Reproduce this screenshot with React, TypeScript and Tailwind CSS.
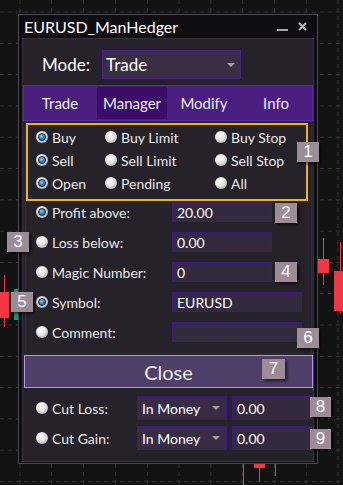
import React from "react";

const badgeSpots = [
  { n: "1", cls: "left-[297px] top-[142px] w-[22px]" },
  { n: "2", cls: "left-[275px] top-[203px] w-[22px]" },
  { n: "3", cls: "left-[7px] top-[232px] w-[22px]" },
  { n: "4", cls: "left-[275px] top-[262px] w-[22px]" },
  { n: "5", cls: "left-[11px] top-[292px] w-[22px]" },
  { n: "6", cls: "left-[297px] top-[328px] w-[22px]" },
  { n: "7", cls: "left-[262px] top-[359px] w-[23px]" },
  { n: "8", cls: "left-[310px] top-[397px] w-[21px]" },
  { n: "9", cls: "left-[310px] top-[429px] w-[21px]" },
];

const Radio: React.FC<{ on?: boolean }> = ({ on }) =>
  on ? (
    <span className="flex h-[12px] w-[12px] shrink-0 items-center justify-center rounded-full bg-[radial-gradient(circle_at_40%_35%,#ffffff,#c4c4c4_60%,#8a8a8a)]">
      <span className="h-[8px] w-[8px] rounded-full border border-[#14253a] bg-[radial-gradient(circle_at_40%_35%,#86cdf6,#2383c4_55%,#0b4877)]" />
    </span>
  ) : (
    <span className="h-[12px] w-[12px] shrink-0 rounded-full bg-[radial-gradient(circle_at_40%_35%,#ffffff,#e4e4e4_45%,#9a9a9a)]" />
  );

const Arrow = () => (
  <span className="h-0 w-0 border-x-[4px] border-t-[4px] border-x-transparent border-t-[#a3a3a3]" />
);

const Chart = () => {
  const xs = Array.from({ length: 11 }, (_, i) => 20 + i * 31.8);
  const ys = Array.from({ length: 16 }, (_, i) => 12 + i * 31.3);
  return (
    <svg className="absolute inset-0" width="343" height="485">
      {xs.map((x) => (
        <line key={"v" + x} x1={x} y1={0} x2={x} y2={485} stroke="#383838" strokeDasharray="4 4" />
      ))}
      {ys.map((y) => (
        <line key={"h" + y} x1={0} y1={y} x2={343} y2={y} stroke="#383838" strokeDasharray="4 4" />
      ))}
      <line x1={4.5} y1={275} x2={4.5} y2={327} stroke="#f23645" />
      <rect x={0} y={292} width={9} height={26} fill="#f23645" />
      <rect x={14} y={289} width={4} height={31} fill="#139a7e" />
      <line x1={323.5} y1={238} x2={323.5} y2={285} stroke="#f23645" />
      <rect x={318} y={259} width={11} height={14} fill="#f23645" />
      <line x1={340.5} y1={242} x2={340.5} y2={313} stroke="#f23645" />
      <rect x={334} y={271} width={10} height={40} fill="#f23645" />
      <line x1={243.5} y1={463} x2={243.5} y2={485} stroke="#f23645" />
      <line x1={259.5} y1={463} x2={259.5} y2={482} stroke="#f23645" />
      <rect x={254} y={463} width={11} height={5} fill="#f23645" />
      <line x1={270} y1={463.5} x2={281} y2={463.5} stroke="#139a7e" />
      <line x1={275.5} y1={463} x2={275.5} y2={476} stroke="#139a7e" />
    </svg>
  );
};

const orders: [string, boolean][] = [
  ["Buy", true], ["Buy Limit", false], ["Buy Stop", false],
  ["Sell", true], ["Sell Limit", false], ["Sell Stop", false],
  ["Open", true], ["Pending", false], ["All", false],
];

const filters = [
  { label: "Profit above:", value: "20.00", on: true, wide: false },
  { label: "Loss below:", value: "0.00", on: false, wide: false },
  { label: "Magic Number:", value: "0", on: false, wide: false },
  { label: "Symbol:", value: "EURUSD", on: true, wide: true },
  { label: "Comment:", value: "", on: false, wide: true },
];

export default function App() {
  return (
    <div className="relative h-[485px] w-[343px] overflow-hidden bg-[#131313] font-['Lato',sans-serif] text-[#e8e8e8]">
      <Chart />
      <div className="relative pl-[18px] pt-[14px]">
        <div className="flex h-[450px] w-[300px] flex-col border border-[#4a4852] bg-[#0e0d11] px-[3px] pb-[1px]">
          {/* title bar */}
          <div className="flex h-[23px] shrink-0 items-center justify-between pl-[2px] pr-[7px]">
            <span className="text-[16px] leading-none text-white">EURUSD_ManHedger</span>
            <div className="flex items-center gap-[10px]">
              <svg width="11" height="10" viewBox="0 0 11 10">
                <line x1="0" y1="8" x2="11" y2="8" stroke="#a9a9a9" strokeWidth="2" />
              </svg>
              <svg width="9" height="9" viewBox="0 0 9 9">
                <path d="M1 1L8 8M8 1L1 8" stroke="#b3b3b3" strokeWidth="2" />
              </svg>
            </div>
          </div>

          {/* body */}
          <div className="flex flex-1 flex-col border border-[#38343e] bg-[#262229]">
            <div className="mt-[11px] flex h-[29px] items-center pl-[19px]">
              <span className="w-[60px] text-[17px] text-white">Mode:</span>
              <div className="flex h-[29px] w-[139px] items-center justify-between border border-[#4b1e8e] bg-[#3a2e45] pl-[3px] pr-[5px]">
                <span className="text-[17px] text-white">Trade</span>
                <Arrow />
              </div>
            </div>

            <div className="mt-[6px] grid h-[36px] grid-cols-4 border border-[#5b2b9e] bg-[#4a1e7e] py-[1px] text-[15px] text-[#ececf2]">
              <div className="flex items-center justify-center">Trade</div>
              <div className="mx-[1px] flex items-center justify-center bg-[#3b0d69]">Manager</div>
              <div className="flex items-center justify-center">Modify</div>
              <div className="flex items-center justify-center">Info</div>
            </div>

            <div className="ml-[2px] w-[287px] border border-[#2f1d78] pb-[11px]">
              <div className="mt-[1px] grid h-[78px] w-[282px] grid-cols-[69px_110px_1fr] content-start gap-y-[1px] border-2 border-[#efb21a] pl-[8px] pt-[1px] text-[14px]">
                {orders.map(([t, on]) => (
                  <div key={t} className="flex h-[22px] items-center gap-[4px]">
                    <Radio on={on} />
                    <span>{t}</span>
                  </div>
                ))}
              </div>

              <div className="mt-[1px] flex flex-col gap-[10px] pl-[10px] text-[14px]">
                {filters.map((f) => (
                  <div key={f.label} className="flex h-[20px] items-center">
                    <Radio on={f.on} />
                    <span className="ml-[4px] w-[120px]">{f.label}</span>
                    <div
                      className={
                        "flex h-[20px] items-center border border-[#3b1a88] bg-[#342a40] pl-[4px] text-white " +
                        (f.wide ? "w-[130px]" : "w-[100px]")
                      }
                    >
                      {f.value}
                    </div>
                  </div>
                ))}
              </div>
            </div>

            <button className="ml-[1px] mt-[1px] flex h-[33px] w-[289px] items-center justify-center border border-[#b195e6] bg-[#4e4068] text-[20px] text-[#ececec]">
              Close
            </button>

            <div className="mt-[8px] flex flex-col gap-[6px] pl-[13px] text-[14px]">
              {["Cut Loss:", "Cut Gain:"].map((t) => (
                <div key={t} className="flex h-[24px] items-center">
                  <Radio />
                  <span className="ml-[4px] w-[85px]">{t}</span>
                  <div className="flex h-[24px] w-[90px] items-center justify-between border border-[#3b1a88] bg-[#382c44] pl-[4px] pr-[6px] text-white">
                    <span>In Money</span>
                    <Arrow />
                  </div>
                  <div className="ml-[5px] flex h-[24px] w-[80px] items-center border border-[#3b1a88] bg-[#342a40] pl-[4px] text-white">
                    0.00
                  </div>
                </div>
              ))}
            </div>
          </div>
        </div>
      </div>

      {badgeSpots.map((b) => (
        <div
          key={b.n}
          className={
            "absolute flex h-[20px] items-center justify-center bg-[#9b8c98] font-['Liberation_Sans',sans-serif] text-[17px] text-white shadow-[2px_2px_3px_rgba(0,0,0,0.6)] " +
            b.cls
          }
        >
          {b.n}
        </div>
      ))}
    </div>
  );
}
